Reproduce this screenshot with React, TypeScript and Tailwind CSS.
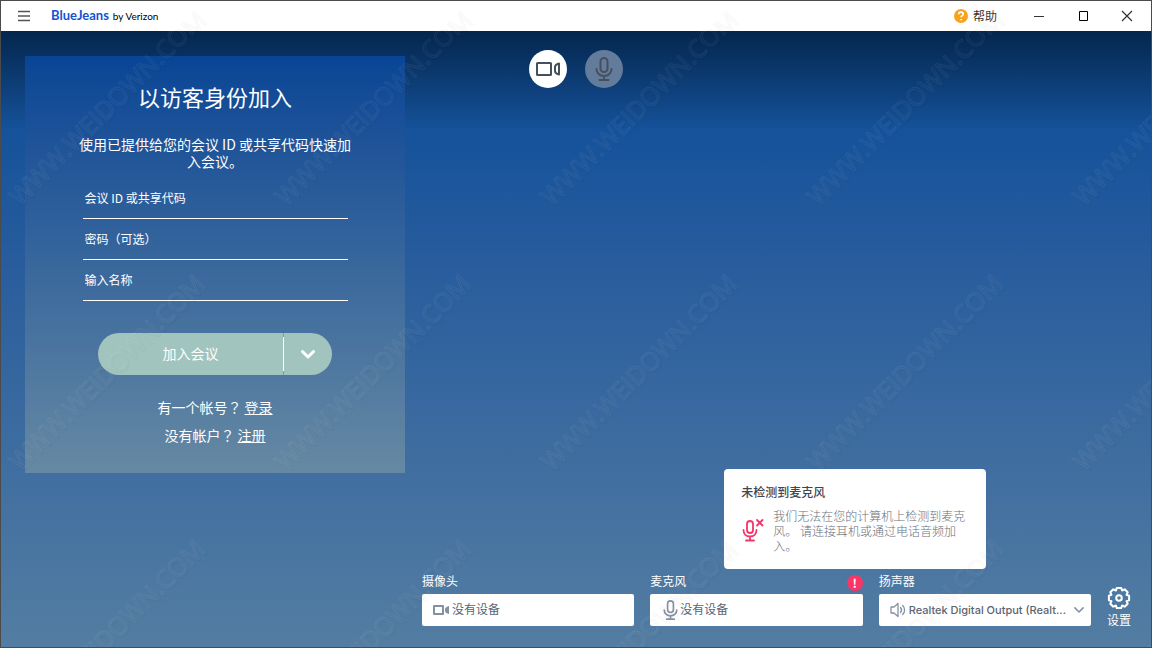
import { useState } from 'react';
import type { ReactNode } from 'react';

type IconProps = { className?: string };

const CameraIcon = ({ className }: IconProps) => (
  <svg viewBox="0 0 24 24" fill="none" stroke="currentColor" strokeWidth="2" strokeLinejoin="round" className={className}>
    <rect x="1" y="6" width="14" height="12" rx="0.5" />
    <path d="M23 6.5v11c-2.400-.6-4-1.800-4-3.500v-4c0-1.700 1.600-2.900 4-3.500z" />
  </svg>
);

const CameraSmallIcon = ({ className }: IconProps) => (
  <svg viewBox="0 0 16 12" fill="none" stroke="currentColor" strokeWidth="2" strokeLinejoin="round" className={className}>
    <rect x="1" y="2" width="9" height="8" />
    <path d="M16 2v8c-2-.5-4-1.500-4-3V5c0-1.500 2-2.500 4-3z" fill="currentColor" stroke="none" />
  </svg>
);

const MicIcon = ({ className }: IconProps) => (
  <svg viewBox="0 0 18 24" fill="none" stroke="currentColor" strokeWidth="2" strokeLinecap="round" className={className}>
    <rect x="5.500" y="1" width="7" height="14" rx="3.500" />
    <path d="M1.500 12c0 4 3.200 7 7.500 7s7.500-3 7.500-7M9 19v4M4.500 23h9" />
  </svg>
);

const MicMissingIcon = ({ className }: IconProps) => (
  <svg viewBox="0 0 22 24" fill="none" stroke="currentColor" strokeWidth="1.800" strokeLinecap="round" className={className}>
    <rect x="5" y="3" width="6" height="12" rx="3" />
    <path d="M1.500 12c0 4 2.800 6.500 6.500 6.500s6.500-2.500 6.500-6.500M8 18.500v3.500M4 22.500h8" />
    <path d="M15 2l5.500 5.500M20.500 2L15 7.500" />
  </svg>
);

const SpeakerIcon = ({ className }: IconProps) => (
  <svg viewBox="0 0 16 16" fill="none" stroke="currentColor" strokeWidth="1.300" strokeLinejoin="round" className={className}>
    <path d="M1 5h3l4-3.500v13L4 11H1z" />
    <path d="M10.500 5.500c1.200 1.400 1.200 3.600 0 5M12.700 3.500c2.500 2.500 2.500 6.500 0 9" strokeLinecap="round" />
  </svg>
);

const GearIcon = ({ className }: IconProps) => (
  <svg viewBox="0 0 24 24" fill="none" stroke="currentColor" strokeWidth="2" strokeLinejoin="round" className={className}>
    <path d="M9.800 1.900h4.400l.9 2.600 2.600-1.200 3 3-1.200 2.600 2.600.9v4.400l-2.600.9 1.200 2.600-3 3-2.600-1.200-.9 2.600H9.800l-.9-2.600-2.600 1.200-3-3 1.200-2.600-2.600-.9V9.800l2.600-.9-1.200-2.600 3-3 2.600 1.200z" />
    <circle cx="12" cy="12" r="2.800" />
  </svg>
);

const Chevron = ({ className }: IconProps) => (
  <svg viewBox="0 0 16 10" fill="none" stroke="currentColor" strokeLinecap="round" strokeLinejoin="round" className={className}>
    <path d="M2.500 2.500 8 8l5.500-5.500" />
  </svg>
);

const Watermark = () => (
  <svg className="pointer-events-none absolute inset-0 h-full w-full" aria-hidden="true">
    <defs>
      <pattern id="tile" width="266" height="265" patternUnits="userSpaceOnUse">
        <g className="font-['Open_Sans',sans-serif] text-[25px]" fill="none">
          <text transform="translate(21 208) rotate(-45)" stroke="#000" strokeOpacity="0.03">WWW.WEIDOWN.COM</text>
          <text transform="translate(19 206) rotate(-45)" stroke="#fff" strokeOpacity="0.06">WWW.WEIDOWN.COM</text>
        </g>
      </pattern>
    </defs>
    <rect width="100%" height="100%" fill="url(#tile)" />
  </svg>
);

const fields = [
  { id: 'meeting', label: '会议 ID 或共享代码', type: 'text' },
  { id: 'passcode', label: '密码（可选）', type: 'password' },
  { id: 'name', label: '输入名称', type: 'text' },
];

const TitleBar = () => (
  <header className="flex h-[30px] items-center bg-white text-[#333]">
    <button aria-label="菜单" className="ml-4 text-[#555]">
      <svg viewBox="0 0 14 14" className="size-[14px]" stroke="currentColor" strokeWidth="1.300"><path d="M1 2.500h12M1 7h12M1 11.500h12" /></svg>
    </button>
    <div className="ml-5 flex items-baseline gap-1 font-['Lato',sans-serif]">
      <span className="text-[13px] font-bold text-[#1254d1]">BlueJeans</span>
      <span className="text-[10px] text-black">by Verizon</span>
    </div>
    <button className="ml-auto flex items-center gap-1 text-xs">
      <svg viewBox="0 0 16 16" className="size-4">
        <circle cx="8" cy="8" r="7" fill="#f9a21b" />
        <path d="M5.800 6.200c0-1.300 1-2 2.200-2s2.200.8 2.200 1.900c0 1.500-2.100 1.600-2.100 3.200M8.100 11v1.300" fill="none" stroke="#fff" strokeWidth="1.700" />
      </svg>
      帮助
    </button>
    <button aria-label="最小化" className="ml-9">
      <svg viewBox="0 0 12 12" className="size-3" stroke="currentColor"><path d="M1 6.500h10" /></svg>
    </button>
    <button aria-label="最大化" className="ml-8">
      <svg viewBox="0 0 12 12" className="size-3" fill="none" stroke="#000"><path d="M2.500 1.500h8v9h-8z" /></svg>
    </button>
    <button aria-label="关闭" className="mr-[18px] ml-8">
      <svg viewBox="0 0 12 12" className="size-3" stroke="currentColor" strokeWidth="1.200"><path d="M1 1l10 10M11 1L1 11" /></svg>
    </button>
  </header>
);

const GuestCard = () => (
  <form className="flex w-[380px] flex-col items-center bg-linear-to-b from-[#084595] via-[#2f609b] via-40% to-[#6689a3] px-[50px] pt-6 pb-6">
    <h1 className="text-[22px] leading-8">以访客身份加入</h1>
    <p className="mt-6 text-center text-sm leading-[17px]">使用已提供给您的会议 ID 或共享代码快速加入会议。</p>
    <div className="mt-2 flex w-[265px] flex-col">
      {fields.map((field) => (
        <input
          key={field.id}
          id={field.id}
          type={field.type}
          aria-label={field.label}
          placeholder={field.label}
          className="h-[41px] border-b border-white bg-transparent px-0.5 pb-0.5 text-xs outline-none placeholder:text-white"
        />
      ))}
    </div>
    <div className="mt-8 flex h-[42px] w-[234px] items-center overflow-hidden rounded-full bg-[#a1c4be]">
      <button type="submit" className="h-full flex-1 pb-0.5 text-sm">加入会议</button>
      <span className="h-full w-px border-y-4 border-[#3fbf8a] bg-white" />
      <button type="button" aria-label="更多加入选项" className="flex h-full w-12 items-center justify-center">
        <Chevron className="w-4 stroke-3" />
      </button>
    </div>
    <div className="mt-[18px] text-center font-['Noto_Sans_CJK_TC',sans-serif] text-sm leading-7">
      <p>有一个帐号？ <a href="#login" className="underline">登录</a></p>
      <p>没有帐户？ <a href="#signup" className="underline">注册</a></p>
    </div>
  </form>
);

type DeviceProps = {
  id: string;
  label: string;
  icon: ReactNode;
  value: string;
  latin?: boolean;
  children?: ReactNode;
};

const Device = ({ id, label, icon, value, latin, children }: DeviceProps) => (
  <div className="relative min-w-0 flex-1">
    <label htmlFor={id} className="block text-xs leading-4">{label}</label>
    <div className="mt-[5px] flex h-8 items-center rounded-xs bg-white pr-1.5 pl-[11px] text-[#8491a3]">
      <span className="flex w-[19px] shrink-0">{icon}</span>
      <select
        id={id}
        className={`min-w-0 flex-1 appearance-none bg-transparent text-[#5b6470] outline-none ${latin ? "font-['Inter',sans-serif] text-[11px] font-medium" : 'pb-0.5 text-xs'}`}
      >
        <option>{value}</option>
      </select>
      {latin && <Chevron className="w-3 shrink-0 stroke-2" />}
    </div>
    {children}
  </div>
);

const MicNotice = () => (
  <div role="alert" className="absolute bottom-full left-[74px] mb-1 h-[100px] w-[262px] rounded-sm bg-white pt-[15px] pr-4 pl-[17px]">
    <h2 className="text-xs leading-4 font-medium text-[#3d4654]">未检测到麦克风</h2>
    <div className="mt-2 flex gap-2">
      <MicMissingIcon className="mt-2.5 h-6 w-6 shrink-0 text-[#f5356a]" />
      <p className="text-xs leading-[15px] font-light text-[#69717d]">我们无法在您的计算机上检测到麦克风。 请连接耳机或通过电话音频加入。</p>
    </div>
  </div>
);

export default function App() {
  const [cameraOn, setCameraOn] = useState(true);

  return (
    <div className="relative flex min-h-screen flex-col border border-[#4b4b4b] font-['Noto_Sans_CJK_SC',sans-serif] text-white">
      <TitleBar />
      <main className="flex flex-1 flex-col justify-between bg-[linear-gradient(#04264e,#15529a_16%,#295d9d_39%,#406ea0_71%,#537da2)]">
        <div className="grid grid-cols-[1fr_auto_1fr] items-start pl-6">
          <div className="pt-[25px]">
            <GuestCard />
          </div>
          <div className="-ml-6 flex gap-[18px] pt-[19px]">
            <button
              aria-label="摄像头"
              aria-pressed={cameraOn}
              onClick={() => setCameraOn(!cameraOn)}
              className="flex size-[38px] items-center justify-center rounded-full bg-white text-[#46505d]"
            >
              <CameraIcon className="size-6" />
            </button>
            <button aria-label="麦克风" disabled className="flex size-[38px] items-center justify-center rounded-full bg-[#637c9c] text-[#46505d]">
              <MicIcon className="h-6 w-[18px]" />
            </button>
          </div>
        </div>
        <div className="flex items-end gap-4 pr-5 pb-[21px] pl-[421px]">
          <Device id="camera" label="摄像头" value="没有设备" icon={<CameraSmallIcon className="h-3 w-4" />} />
          <Device id="mic" label="麦克风" value="没有设备" icon={<MicIcon className="ml-0.5 h-5 w-[15px]" />}>
            <span className="absolute top-0.5 right-0 flex size-4 items-center justify-center rounded-full bg-[#fb3566] text-xs font-bold">!</span>
            <MicNotice />
          </Device>
          <Device id="speaker" label="扬声器" value="Realtek Digital Output (Realt..." latin icon={<SpeakerIcon className="size-4" />} />
          <button className="-mb-1 flex w-6 shrink-0 flex-col items-center text-xs">
            <GearIcon className="size-6" />
            <span className="leading-5 whitespace-nowrap">设置</span>
          </button>
        </div>
      </main>
      <Watermark />
    </div>
  );
}
